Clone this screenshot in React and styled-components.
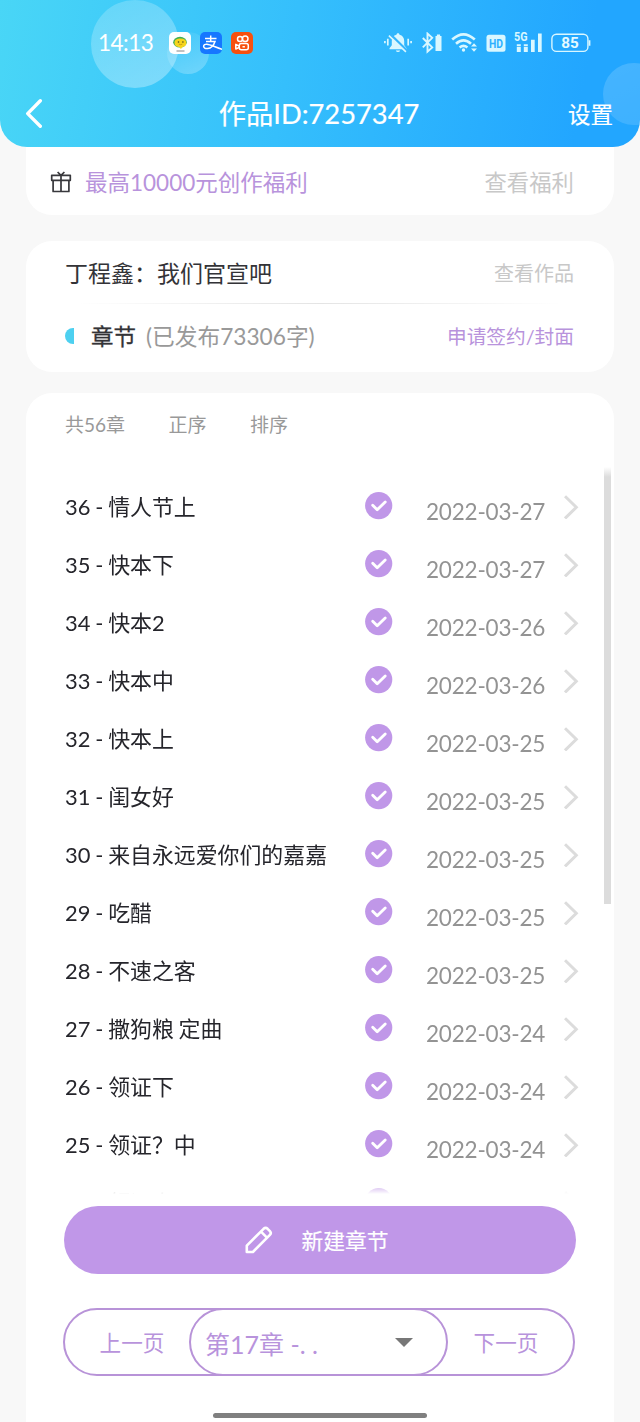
import React from 'react'
import styled, { createGlobalStyle } from 'styled-components'

const GlobalStyle = createGlobalStyle`
  * {
    box-sizing: border-box;
  }
  body {
    margin: 0;
    background: #f8f8f8;
    font-family: Lato, 'Noto Sans CJK SC', sans-serif;
  }
`

const Page = styled.div`
  position: relative;
  width: 640px;
  height: 1422px;
  overflow: hidden;
  display: flex;
  flex-direction: column;
  align-items: center;
  background: #f8f8f8;
`

const Header = styled.header`
  position: relative;
  z-index: 1;
  flex: none;
  width: 640px;
  height: 147px;
  overflow: hidden;
  border-radius: 0 0 27px 27px;
  background: linear-gradient(100deg, #49d6f6 0%, #35bffc 45%, #22a6ff 90%);
  color: #fff;
`

const Bubble = styled.div`
  position: absolute;
  left: ${props => props.$x - props.$r}px;
  top: ${props => props.$y - props.$r}px;
  width: ${props => props.$r * 2}px;
  height: ${props => props.$r * 2}px;
  border-radius: 50%;
  background: linear-gradient(155deg, rgba(255, 255, 255, ${props => props.$from}), rgba(255, 255, 255, ${props => props.$to}));
`

const StatusBar = styled.div`
  position: relative;
  display: flex;
  align-items: center;
  height: 86px;
  padding: 0 49px 0 98px;
`

const Clock = styled.span`
  width: 71px;
  font-size: 22.5px;
  line-height: 28px;
  letter-spacing: -0.5px;
  white-space: nowrap;
`

const AppIcons = styled.div`
  display: flex;
  gap: 9px;
`

const StatusIcons = styled.div`
  display: flex;
  align-items: center;
  gap: 8px;
  margin-left: auto;
`

const TitleBar = styled.div`
  position: relative;
  display: grid;
  grid-template-columns: 1fr auto 1fr;
  align-items: center;
  height: 55px;
  padding: 0 27px 0 25px;
`

const Title = styled.h1`
  margin: 0;
  padding-top: 1px;
  font-size: 27.3px;
  font-weight: 400;
  line-height: 36px;
  -webkit-text-stroke: 0.2px;
`

const Settings = styled.span`
  justify-self: end;
  padding-top: 2px;
  font-size: 22.5px;
  line-height: 30px;
  -webkit-text-stroke: 0.2px;
`

const Card = styled.section`
  flex: none;
  width: 588px;
  background: #fff;
  border-radius: 26px;
`

const BenefitCard = styled(Card)`
  display: flex;
  align-items: center;
  height: 68px;
  padding: 2px 40px 0 24px;
  border-radius: 0 0 26px 26px;
`

const WorkCard = styled(Card)`
  height: 131px;
  margin-top: 26px;
  padding: 0 40px 0 39px;
`

const WorkRow = styled.div`
  display: flex;
  align-items: center;
  height: ${props => props.$height}px;
`

const Divider = styled.div`
  height: 1px;
  margin: 0 12px;
  background: linear-gradient(90deg, #fff, #e4e4e4 50%, #fff);
`

const Text = styled.span`
  margin-left: ${props => props.$indent || 0}px;
  padding-top: 2px;
  color: ${props => props.$color};
  font-size: ${props => props.$size}px;
  line-height: 32px;
  white-space: nowrap;
  -webkit-text-stroke: ${props => props.$stroke || 0}px;
`

const PushRight = styled(Text)`
  margin-left: auto;
`

const HalfDot = styled.i`
  width: 9px;
  height: 16px;
  margin-right: 17px;
  border-radius: 9px 0 0 9px;
  background: #4dd0f0;
`

const ChapterCard = styled(Card)`
  position: relative;
  height: 1060px;
  margin-top: 21px;
`

const Toolbar = styled.div`
  display: flex;
  gap: 43.5px;
  height: 74px;
  padding: 14px 39px 0;
`

const List = styled.ul`
  height: 727px;
  margin: 0;
  padding: 10px 36px 0 39px;
  overflow: hidden;
  list-style: none;
  mask-image: linear-gradient(#000 715px, transparent 727px);
`

const Row = styled.li`
  display: grid;
  grid-template-columns: 299.5px 61.5px 138px 15px;
  align-items: center;
  height: 58px;
`

const ChapterName = styled(Text)`
  padding-top: 1px;
  word-spacing: -0.8px;
`

const DateText = styled(Text)`
  padding-top: 12px;
  letter-spacing: -0.2px;
`

const Scrollbar = styled.div`
  position: absolute;
  top: 74px;
  right: 3px;
  width: 7px;
  height: 437px;
  background: linear-gradient(#fff, #dcdcdc 10px);
`

const CreateButton = styled.button`
  display: flex;
  align-items: center;
  justify-content: center;
  gap: 28px;
  width: 512px;
  height: 68px;
  margin: 12px 38px 0;
  padding: 0 6px 0 0;
  border: 0;
  border-radius: 34px;
  background: #c097e8;
  color: #fff;
  font-family: inherit;
`

const Pager = styled.div`
  display: flex;
  width: 512px;
  height: 68px;
  margin: 34px 37px 0;
  border: 2px solid #b893d8;
  border-radius: 34px;
`

const PagerStep = styled.div`
  display: flex;
  align-items: center;
  justify-content: center;
  width: 124px;
  padding: ${props => props.$pad};
`

const PagerSelect = styled.div`
  display: flex;
  align-items: center;
  justify-content: space-between;
  width: 259px;
  margin: -2px 0;
  padding: 1px 33px 0 14px;
  border: 2px solid #b893d8;
  border-radius: 34px;
`

const HomeBar = styled.div`
  position: absolute;
  left: 213px;
  bottom: 4px;
  z-index: 2;
  width: 214px;
  height: 5px;
  border-radius: 3px;
  background: #808080;
`

const chapters = [
  { name: '36 - 情人节上', date: '2022-03-27' },
  { name: '35 - 快本下', date: '2022-03-27' },
  { name: '34 - 快本2', date: '2022-03-26' },
  { name: '33 - 快本中', date: '2022-03-26' },
  { name: '32 - 快本上', date: '2022-03-25' },
  { name: '31 - 闺女好', date: '2022-03-25' },
  { name: '30 - 来自永远爱你们的嘉嘉', date: '2022-03-25' },
  { name: '29 - 吃醋', date: '2022-03-25' },
  { name: '28 - 不速之客', date: '2022-03-25' },
  { name: '27 - 撒狗粮 定曲', date: '2022-03-24' },
  { name: '26 - 领证下', date: '2022-03-24' },
  { name: '25 - 领证？中', date: '2022-03-24' },
  { name: '24 - 领证上', date: '2022-03-24' },
]

const LemonIcon = () => (
  <svg width="22" height="22" viewBox="0 0 22 22">
    <rect width="22" height="22" rx="5" fill="#fff" />
    <ellipse cx="11" cy="10.2" rx="6.8" ry="5.4" fill="#3fae55" />
    <path d="M5.500 11c0-3.200 2.600-4.400 6.200-4.400s5.700 1.500 5.700 4.500c0 2.600-2.300 4-4.300 4.200l-1.200 2-1.200-2C7.700 15 5.500 13.600 5.500 11z" fill="#f7d51d" />
    <circle cx="9.500" cy="10" r=".8" fill="#4a4a20" />
    <circle cx="13.900" cy="10" r=".8" fill="#4a4a20" />
    <path d="M9.900 12.200q1.700 1 3.400 0" stroke="#b78a10" strokeWidth=".7" fill="none" />
    <path d="M7.500 19h8" stroke="#777" strokeWidth=".9" />
  </svg>
)

const PayIcon = () => (
  <svg width="22" height="22" viewBox="0 0 22 22">
    <rect width="22" height="22" rx="5" fill="#1677ff" />
    <path d="M5 6.600h11.500M10.700 3.500v6M6 9.600h9c-1 3-3.500 6.700-7.400 7-2.500.2-4-1-4-2.300 0-1.500 1.600-2.200 3.200-2.100 3.600.2 9 3.300 15.200 5" fill="none" stroke="#fff" strokeWidth="1.500" />
  </svg>
)

const CameraIcon = () => (
  <svg width="22" height="22" viewBox="0 0 22 22">
    <rect width="22" height="22" rx="5" fill="#f7500f" />
    <g fill="none" stroke="#fff" strokeWidth="1.500">
      <circle cx="9" cy="7" r="2.500" />
      <circle cx="14.200" cy="6.800" r="2.800" />
      <rect x="8.300" y="11.500" width="9" height="6.300" rx="2" />
      <path d="M8.300 14.100L4.800 12.400v4.600l3.500-1.700" strokeLinejoin="round" />
      <path d="M11.500 14.700h2.400" />
    </g>
  </svg>
)

const BellOffIcon = () => (
  <svg width="30" height="22" viewBox="0 0 30 22" fill="#d9f7ff">
    <path d="M15 1.200c.9 0 1.500.6 1.500 1.500 3.100.8 4.700 3 4.700 6.300v4.200l2.300 3v1.100H6.500v-1.100l2.300-3V9c0-3.300 1.600-5.500 4.700-6.300 0-.9.600-1.500 1.500-1.500zM12.800 18.600h4.400q-.5 1.500-2.200 1.500t-2.200-1.500z" />
    <path d="M7.200 2.200l17 16.600" stroke="#35b5fc" strokeWidth="2.400" />
    <path d="M5.900 3.600l17 16.200" stroke="#d9f7ff" strokeWidth="1.600" />
    <path d="M4.800 6.800v6.600M1.900 9v2.200M25.200 6.800v6.600M28.100 9v2.200" stroke="#d9f7ff" strokeWidth="1.700" />
  </svg>
)

const BluetoothIcon = () => (
  <svg width="22" height="22" viewBox="0 0 22 22" fill="none" stroke="#d9f7ff">
    <path d="M1.800 6l9.400 9.400-4.700 4.200V1.600l4.700 4.300L1.800 15.300" strokeWidth="1.900" />
    <path d="M14.500 4h1.400V2.500h3.200V4h1.400v15h-6z" fill="#d9f7ff" stroke="none" />
  </svg>
)

const WifiIcon = () => (
  <svg width="27" height="22" viewBox="0 0 27 22" fill="none" stroke="#d9f7ff" strokeWidth="2.600">
    <path d="M1.200 7.500Q12.500-2.900 23.800 7.500M5 11.800q7.500-6.700 15 0M8.600 15.400q3.900-3.200 7.800 0" />
    <circle cx="12.500" cy="18" r="1.700" fill="#d9f7ff" stroke="none" />
    <path d="M20 14.600l3-3.300 3 3.300zM20 16.500l3 3.300 3-3.300z" fill="#d9f7ff" stroke="none" />
  </svg>
)

const HdIcon = () => (
  <svg width="20" height="22" viewBox="0 0 20 22">
    <rect x=".5" y="2.800" width="19" height="17" rx="2.500" fill="#d9f7ff" />
    <text x="10" y="16.100" textAnchor="middle" textLength="14" lengthAdjust="spacingAndGlyphs" fontFamily="Roboto, sans-serif" fontWeight="700" fontSize="13.500" fill="#2db0ff">HD</text>
  </svg>
)

const SignalIcon = () => (
  <svg width="29" height="26" viewBox="0 -2 29 26" fill="#d9f7ff">
    <text x="0" y="9.400" textLength="13.500" lengthAdjust="spacingAndGlyphs" fontFamily="Roboto, sans-serif" fontWeight="700" fontSize="12.500">5G</text>
    <path d="M2.800 12.300h4v2h-4zM2.800 15h4v5h-4zM9.800 12.300h4v2h-4zM9.800 15h4v5h-4zM17 7.800h3.700V20H17zM24 1.500h3.700V20H24z" />
  </svg>
)

const BatteryIcon = () => (
  <svg width="40" height="22" viewBox="0 0 40 22">
    <rect x=".9" y="2.200" width="36" height="17.200" rx="4.500" fill="none" stroke="#d9f7ff" strokeWidth="1.400" />
    <path d="M38.500 8.300v5.400" stroke="#d9f7ff" strokeWidth="1.800" />
    <text x="19" y="16" textAnchor="middle" textLength="17.500" lengthAdjust="spacingAndGlyphs" fontFamily="Roboto, sans-serif" fontWeight="700" fontSize="15" fill="#e4faff">85</text>
  </svg>
)

const BackIcon = () => (
  <svg width="18" height="30" viewBox="0 0 18 30" fill="none" stroke="#fff" strokeWidth="3.400" strokeLinecap="round" strokeLinejoin="round">
    <path d="M15.300 1.800L2.700 14.600l12.600 12.600" />
  </svg>
)

const GiftIcon = () => (
  <svg width="22" height="22" viewBox="0 0 22 22" fill="none" stroke="#38383c" strokeWidth="1.700" strokeLinejoin="round">
    <path d="M1.700 4.300h18.600v5H1.700zM3.100 9.300h15.800v11.200H3.100zM11 4.300v16.200M7.600 1L11 4.300 14.400 1" />
  </svg>
)

const CheckIcon = () => (
  <svg width="28" height="28" viewBox="0 0 28 28">
    <circle cx="13.700" cy="13.600" r="13.600" fill="#c097e8" />
    <path d="M7.700 13.300l4.500 4.400 8-7.700" fill="none" stroke="#fff" strokeWidth="2.900" strokeLinecap="round" strokeLinejoin="round" />
  </svg>
)

const ArrowIcon = () => (
  <svg width="15" height="26" viewBox="0 0 15 26" fill="none" stroke="#dcdcdc" strokeWidth="3">
    <path d="M1 3.200L12.300 14.300 1 25.400" />
  </svg>
)

const PencilIcon = () => (
  <svg width="28" height="28" viewBox="0 0 28 28" fill="none" stroke="#fff" strokeWidth="2.600" strokeLinejoin="round">
    <path d="M1.800 26v-6.400L18.600 2.800q2-1.900 4 0l2.300 2.300q1.800 1.900 0 3.800L7.900 26zM16 5.600l6.200 6.200" />
  </svg>
)

const CaretIcon = () => (
  <svg width="18" height="9" viewBox="0 0 18 9">
    <path d="M0 0h18L9 9z" fill="#777" />
  </svg>
)

const App = () => (
  <Page>
    <GlobalStyle />
    <Header>
      <Bubble $x={188} $y={53} $r={21} $from={0.02} $to={0.28} />
      <Bubble $x={135} $y={44} $r={44} $from={0.18} $to={0.34} />
      <Bubble $x={634} $y={94} $r={31} $from={0.16} $to={0.12} />
      <StatusBar>
        <Clock>14:13</Clock>
        <AppIcons>
          <LemonIcon />
          <PayIcon />
          <CameraIcon />
        </AppIcons>
        <StatusIcons>
          <BellOffIcon />
          <BluetoothIcon />
          <WifiIcon />
          <HdIcon />
          <SignalIcon />
          <BatteryIcon />
        </StatusIcons>
      </StatusBar>
      <TitleBar>
        <BackIcon />
        <Title>作品ID:7257347</Title>
        <Settings>设置</Settings>
      </TitleBar>
    </Header>

    <BenefitCard>
      <GiftIcon />
      <Text $color="#b893dc" $size={22.5} $indent={13}>最高10000元创作福利</Text>
      <PushRight $color="#c8c8c8" $size={22.4}>查看福利</PushRight>
    </BenefitCard>

    <WorkCard>
      <WorkRow $height={62}>
        <Text $color="#333337" $size={23}>丁程鑫：我们官宣吧</Text>
        <PushRight $color="#c8c8c8" $size={20}>查看作品</PushRight>
      </WorkRow>
      <Divider />
      <WorkRow $height={63}>
        <HalfDot />
        <Text $color="#333337" $size={22.5} $stroke={0.3}>章节</Text>
        <Text $color="#999" $size={22.7} $indent={10}>(已发布73306字)</Text>
        <PushRight $color="#b893dc" $size={19.7}>申请签约/封面</PushRight>
      </WorkRow>
    </WorkCard>

    <ChapterCard>
      <Toolbar>
        <Text $color="#999" $size={19}>共56章</Text>
        <Text $color="#999" $size={19}>正序</Text>
        <Text $color="#999" $size={19}>排序</Text>
      </Toolbar>
      <List>
        {chapters.map(chapter => (
          <Row key={chapter.name}>
            <ChapterName $color="#25252b" $size={21.9}>{chapter.name}</ChapterName>
            <CheckIcon />
            <DateText $color="#939393" $size={22.5}>{chapter.date}</DateText>
            <ArrowIcon />
          </Row>
        ))}
      </List>
      <Scrollbar />
      <CreateButton>
        <PencilIcon />
        <Text $color="#fff" $size={21.8} $stroke={0.2}>新建章节</Text>
      </CreateButton>
      <Pager>
        <PagerStep $pad="0 0 0 10px">
          <Text $color="#b893dc" $size={21.6}>上一页</Text>
        </PagerStep>
        <PagerSelect>
          <Text $color="#b893dc" $size={25}>第17章 -. .</Text>
          <CaretIcon />
        </PagerSelect>
        <PagerStep $pad="0 8px 0 0">
          <Text $color="#b893dc" $size={21.6}>下一页</Text>
        </PagerStep>
      </Pager>
    </ChapterCard>
    <HomeBar />
  </Page>
)

export default App
